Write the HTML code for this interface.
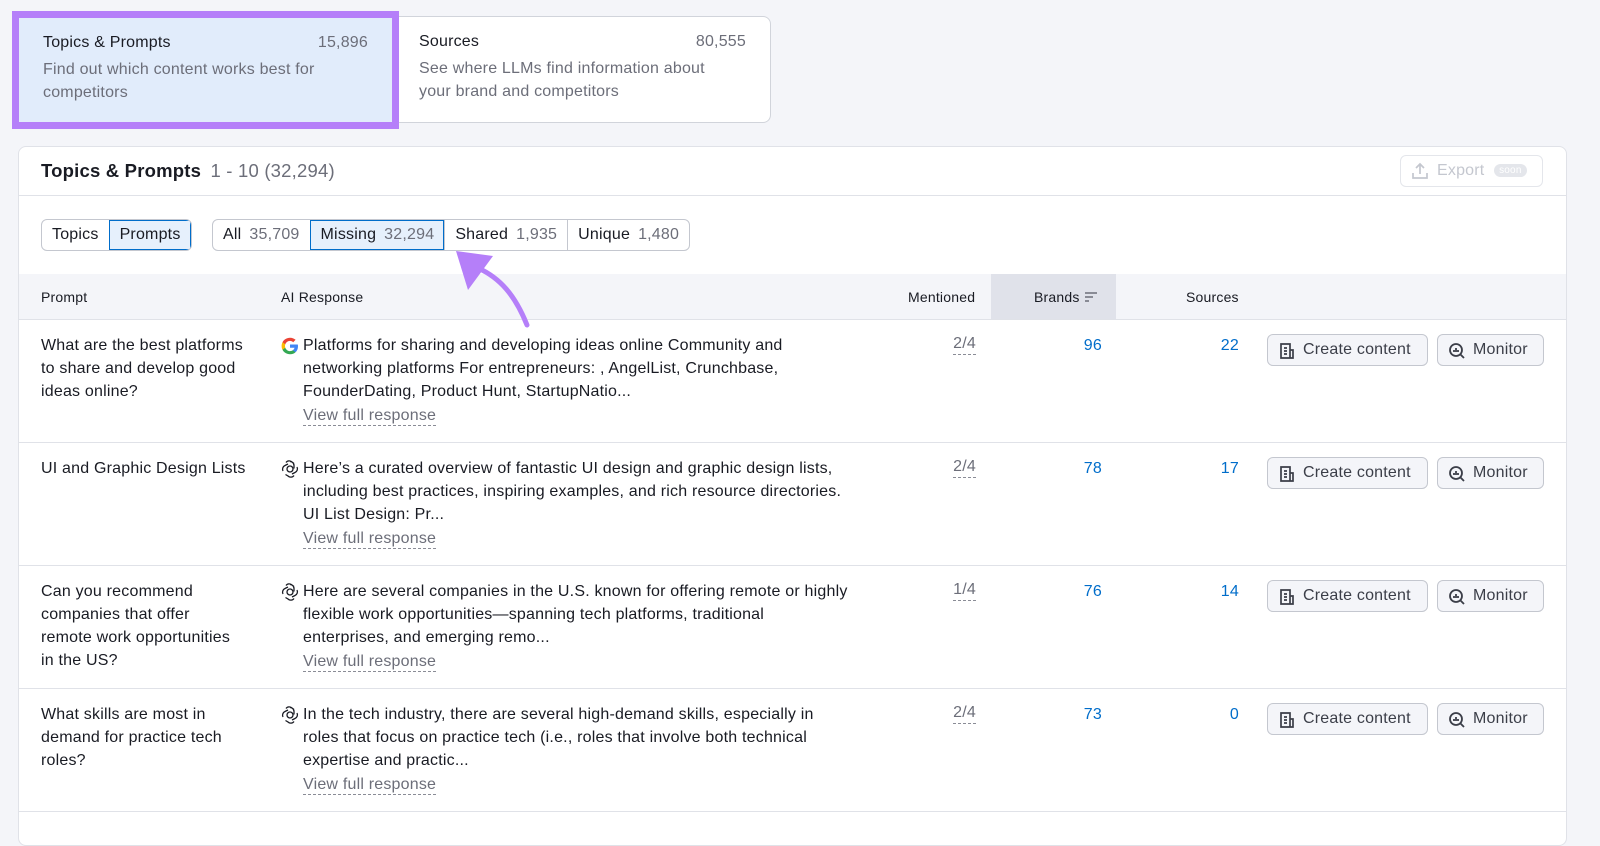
<!DOCTYPE html>
<html><head><meta charset="utf-8"><style>
*{box-sizing:border-box;margin:0;padding:0}
body{width:1600px;height:827px;background:#f4f5f9;font-family:"Liberation Sans",sans-serif;color:#191b23;position:relative;overflow:hidden;font-size:16px;letter-spacing:.2px}
.abs{position:absolute}
.tab{position:absolute;top:16px;height:107px;border:1px solid #d1d4db;border-radius:8px;background:#fff;padding:16px 24px}
.tab .t{font-size:16px;display:flex;justify-content:space-between}
.tab .t span:last-child{color:#6c6e79}
.tab .d{color:#6c6e79;font-size:16px;line-height:23px;margin-top:6px}
.card{position:absolute;left:18px;top:146px;width:1549px;height:700px;background:#fff;border:1px solid #e0e2e8;border-radius:8px}
.seg{position:absolute;top:219px;height:32px;display:flex;border:1px solid #c4c7cf;border-radius:6px;overflow:hidden}
.seg div{padding:0 10px;line-height:30px;font-size:16px;border-left:1px solid #c4c7cf}
.seg div:first-child{border-left:none}
.seg .on{background:#e6f0fc;outline:1px solid #006dca;outline-offset:-1px}
.seg span{color:#6c6e79;margin-left:8px}
.th{position:absolute;top:274px;left:19px;width:1547px;height:46px;background:#f4f5f9;border-bottom:1px solid #e0e2e8;font-size:14px}
.th div{position:absolute;top:15px}
.row{position:absolute;left:19px;width:1547px;height:123px;border-bottom:1px solid #e0e2e8;font-size:16px;line-height:23px;white-space:nowrap}
.row .p{position:absolute;left:22px;top:14px}
.row .ic{position:absolute;left:262px;top:17px;width:18px;height:18px}
.row .r{position:absolute;left:284px;top:14px}
.row .v{color:#6c6e79;border-bottom:1px dashed #8a8c96;display:inline-block;line-height:19px;margin-top:3px}
.row .m{position:absolute;right:590px;top:14px;color:#6c6e79;border-bottom:1px dashed #8a8c96;line-height:20px}
.row .b{position:absolute;right:464px;top:14px;color:#006dca}
.row .s{position:absolute;right:327px;top:14px;color:#006dca}
.btn{position:absolute;top:14px;height:32px;border:1px solid #c4c7cf;border-radius:6px;background:#f4f5f9;color:#3b3e48;line-height:30px;padding-left:35px;font-size:16px}
.btn svg{position:absolute;left:10px;top:7px}
</style></head><body>
<div class="tab" style="left:390px;width:381px">
<div class="t"><span style="padding-left:4px">Sources</span><span>80,555</span></div>
<div class="d" style="padding-left:4px">See where LLMs find information about<br>your brand and competitors</div></div>
<div class="tab" style="left:12px;top:11px;width:387px;height:118px;background:#e1ecfb;border:7px solid #b57ff9;border-radius:0;padding:16px 24px">
<div class="t"><span>Topics &amp; Prompts</span><span>15,896</span></div>
<div class="d">Find out which content works best for<br>competitors</div></div>
<div class="card"></div>
<div class="abs" style="left:19px;top:195px;width:1547px;border-top:1px solid #e0e2e8"></div>
<div class="abs" style="left:41px;top:160px;font-size:18.5px"><b>Topics &amp; Prompts</b> <span style="color:#6c6e79;margin-left:4px">1 - 10 (32,294)</span></div>
<div class="abs" style="left:1400px;top:155px;width:143px;height:32px;border:1px solid #e4e6eb;border-radius:6px;color:#c4c7cf;line-height:30px;padding-left:36px;font-size:16px">
<svg class="abs" style="left:10px;top:6px" width="18" height="18" viewBox="0 0 18 18" fill="none" stroke="#c4c7cf" stroke-width="1.7"><path d="M9 12V2M5 6l4-4 4 4M2 11v5h14v-5"/></svg>Export <span style="background:#e4e6eb;color:#fff;font-size:10px;border-radius:8px;padding:1px 5px;margin-left:5px;vertical-align:2px">soon</span></div>
<div class="seg" style="left:41px"><div>Topics</div><div class="on">Prompts</div></div>
<div class="seg" style="left:212px"><div>All<span>35,709</span></div><div class="on">Missing<span>32,294</span></div><div>Shared<span>1,935</span></div><div>Unique<span>1,480</span></div></div>
<div class="th">
<div style="left:22px">Prompt</div><div style="left:262px">AI Response</div>
<div style="left:889px">Mentioned</div>
<div style="left:972px;top:0;width:125px;height:45px;background:#e0e2ea"></div>
<div style="left:1015px">Brands <svg width="14" height="12" viewBox="0 0 14 12" style="vertical-align:-1px" stroke="#6c6e79" stroke-width="1.6"><path d="M1 2h12M1 6h8M1 10h4"/></svg></div>
<div style="left:1167px">Sources</div></div>

<svg class="abs" style="left:440px;top:240px" width="110" height="95" viewBox="440 240 110 95"><path d="M527 325C515 295 500 278 478 268" fill="none" stroke="#b57ff9" stroke-width="5" stroke-linecap="round"/><path d="M456 251L493 256L468 290Z" fill="#b57ff9"/></svg>

<div class="row" style="top:320px"><div class="p">What are the best platforms<br>to share and develop good<br>ideas online?</div>
<svg class="ic" viewBox="0 0 18 18"><path d="M17 9.2c0-.6-.1-1.2-.2-1.7H9v3.3h4.5c-.2 1-.8 1.9-1.7 2.5v2h2.7C16 13.9 17 11.8 17 9.2z" fill="#4285f4"/><path d="M9 17.3c2.3 0 4.2-.8 5.5-2l-2.7-2c-.7.5-1.700.8-2.8.8-2.2 0-4-1.5-4.7-3.4H1.5v2.1C2.9 15.5 5.8 17.3 9 17.3z" fill="#34a853"/><path d="M4.3 10.7c-.2-.5-.3-1.1-.3-1.7s.1-1.2.3-1.7V5.2H1.5C.9 6.4.6 7.6.6 9s.3 2.6.9 3.8l2.8-2.1z" fill="#fbbc05"/><path d="M9 3.9c1.2 0 2.3.4 3.2 1.3l2.4-2.4C13.2 1.5 11.3.7 9 .7 5.8.7 2.9 2.5 1.5 5.2l2.8 2.1C5 5.4 6.8 3.9 9 3.9z" fill="#ea4335"/></svg>
<div class="r">Platforms for sharing and developing ideas online Community and<br>networking platforms For entrepreneurs: , AngelList, Crunchbase,<br>FounderDating, Product Hunt, StartupNatio...<br><span class="v">View full response</span></div>
<div class="m">2/4</div><div class="b">96</div><div class="s">22</div>
<div class="btn" style="left:1248px;width:161px"><svg width="18" height="18" viewBox="0 0 18 18" fill="none" stroke="#3b3e48" stroke-width="1.7"><path d="M3 2h9v14H3zM6 6h3M6 9h3M6 12h3M12 8h3v8h-3"/></svg>Create content</div>
<div class="btn" style="left:1418px;width:107px"><svg width="18" height="18" viewBox="0 0 18 18" fill="none" stroke="#3b3e48" stroke-width="1.8"><circle cx="8" cy="8" r="6"/><path d="M12.5 12.5L16 16M6 10V8M8 10V6M10 10V8"/></svg>Monitor</div></div>

<div class="row" style="top:443px"><div class="p">UI and Graphic Design Lists</div>
<svg class="ic" viewBox="0 0 18 18" fill="none" stroke="#191b23" stroke-width="1.3"><circle cx="9" cy="9" r="3"/><path d="M9 1.5a4 4 0 0 1 4 4v3M16 7a4 4 0 0 1-2 5.5l-3 1.5M13 15.5a4 4 0 0 1-6 .5l-2.5-1.5M2 11a4 4 0 0 1 2-5.5l3-1.5M5 2.5a4 4 0 0 1 6-.5l2 1.5"/></svg>
<div class="r">Here’s a curated overview of fantastic UI design and graphic design lists,<br>including best practices, inspiring examples, and rich resource directories.<br>UI List Design: Pr...<br><span class="v">View full response</span></div>
<div class="m">2/4</div><div class="b">78</div><div class="s">17</div>
<div class="btn" style="left:1248px;width:161px"><svg width="18" height="18" viewBox="0 0 18 18" fill="none" stroke="#3b3e48" stroke-width="1.7"><path d="M3 2h9v14H3zM6 6h3M6 9h3M6 12h3M12 8h3v8h-3"/></svg>Create content</div>
<div class="btn" style="left:1418px;width:107px"><svg width="18" height="18" viewBox="0 0 18 18" fill="none" stroke="#3b3e48" stroke-width="1.8"><circle cx="8" cy="8" r="6"/><path d="M12.5 12.5L16 16M6 10V8M8 10V6M10 10V8"/></svg>Monitor</div></div>

<div class="row" style="top:566px"><div class="p">Can you recommend<br>companies that offer<br>remote work opportunities<br>in the US?</div>
<svg class="ic" viewBox="0 0 18 18" fill="none" stroke="#191b23" stroke-width="1.3"><circle cx="9" cy="9" r="3"/><path d="M9 1.5a4 4 0 0 1 4 4v3M16 7a4 4 0 0 1-2 5.5l-3 1.5M13 15.5a4 4 0 0 1-6 .5l-2.5-1.5M2 11a4 4 0 0 1 2-5.5l3-1.5M5 2.5a4 4 0 0 1 6-.5l2 1.5"/></svg>
<div class="r">Here are several companies in the U.S. known for offering remote or highly<br>flexible work opportunities—spanning tech platforms, traditional<br>enterprises, and emerging remo...<br><span class="v">View full response</span></div>
<div class="m">1/4</div><div class="b">76</div><div class="s">14</div>
<div class="btn" style="left:1248px;width:161px"><svg width="18" height="18" viewBox="0 0 18 18" fill="none" stroke="#3b3e48" stroke-width="1.7"><path d="M3 2h9v14H3zM6 6h3M6 9h3M6 12h3M12 8h3v8h-3"/></svg>Create content</div>
<div class="btn" style="left:1418px;width:107px"><svg width="18" height="18" viewBox="0 0 18 18" fill="none" stroke="#3b3e48" stroke-width="1.8"><circle cx="8" cy="8" r="6"/><path d="M12.5 12.5L16 16M6 10V8M8 10V6M10 10V8"/></svg>Monitor</div></div>

<div class="row" style="top:689px"><div class="p">What skills are most in<br>demand for practice tech<br>roles?</div>
<svg class="ic" viewBox="0 0 18 18" fill="none" stroke="#191b23" stroke-width="1.3"><circle cx="9" cy="9" r="3"/><path d="M9 1.5a4 4 0 0 1 4 4v3M16 7a4 4 0 0 1-2 5.5l-3 1.5M13 15.5a4 4 0 0 1-6 .5l-2.5-1.5M2 11a4 4 0 0 1 2-5.5l3-1.5M5 2.5a4 4 0 0 1 6-.5l2 1.5"/></svg>
<div class="r">In the tech industry, there are several high-demand skills, especially in<br>roles that focus on practice tech (i.e., roles that involve both technical<br>expertise and practic...<br><span class="v">View full response</span></div>
<div class="m">2/4</div><div class="b">73</div><div class="s">0</div>
<div class="btn" style="left:1248px;width:161px"><svg width="18" height="18" viewBox="0 0 18 18" fill="none" stroke="#3b3e48" stroke-width="1.7"><path d="M3 2h9v14H3zM6 6h3M6 9h3M6 12h3M12 8h3v8h-3"/></svg>Create content</div>
<div class="btn" style="left:1418px;width:107px"><svg width="18" height="18" viewBox="0 0 18 18" fill="none" stroke="#3b3e48" stroke-width="1.8"><circle cx="8" cy="8" r="6"/><path d="M12.5 12.5L16 16M6 10V8M8 10V6M10 10V8"/></svg>Monitor</div></div>
</body></html>
